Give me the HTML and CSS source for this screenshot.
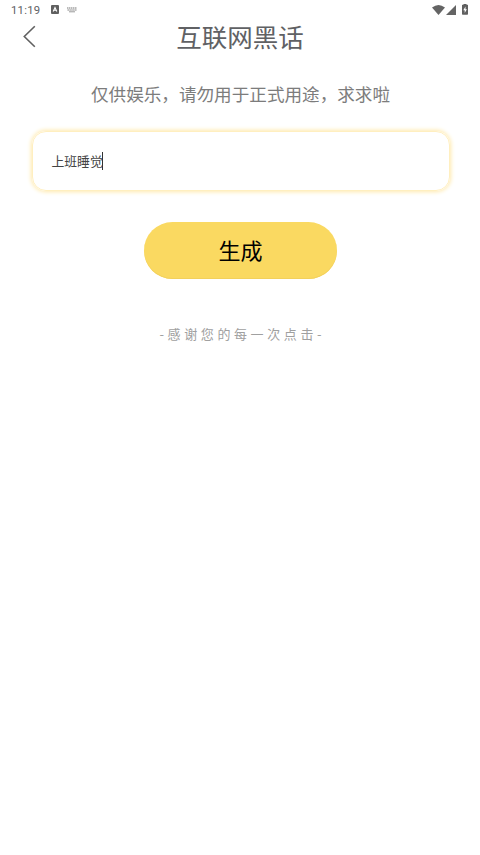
FILE: index.html
```html
<!DOCTYPE html>
<html lang="zh-CN">
<head>
<meta charset="utf-8">
<title>互联网黑话</title>
<link rel="stylesheet" href="styles.css">
</head>
<body>
<div class="status">
  <span class="time">11:19</span>
  <svg class="ime" width="8" height="9" viewBox="0 0 8 9"><rect width="8" height="9" rx="1" fill="#606060"/><path d="M2.200 6.500 4 2.500l1.800 4M2.800 5.300h2.400" fill="none" stroke="#fff" stroke-width="1.100"/></svg>
  <svg class="keyboard" width="10" height="6" viewBox="0 0 10 6"><path d="M0 1h10M.5 3h9" stroke="#777" stroke-width="1.200" stroke-dasharray="1.400 .5"/><path d="M2 4.800h6" stroke="#999" stroke-width="1"/></svg>
  <span class="spacer"></span>
  <svg class="wifi" width="13" height="10" viewBox="0 0 13 10"><path d="M0 2.500Q6.500-2.500 13 2.500L6.500 10Z" fill="#646464"/></svg>
  <svg class="signal" width="10" height="10" viewBox="0 0 10 10"><path d="M10 0v10H0Z" fill="#646464"/></svg>
  <svg class="battery" width="6" height="11" viewBox="0 0 6 11"><path d="M1.500 0h3v.7h1q.5 0 .5.500v8.800q0 .7-.7.700H.7q-.7 0-.7-.7V1.200Q0 .7.500.7h1Z" fill="#606060"/><path d="M3.500 2.500 1.300 6.300h1.400V9l2.200-3.800H3.500Z" fill="#fff"/></svg>
</div>
<header class="header">
  <svg class="back" width="14" height="24" viewBox="0 0 14 24"><path d="M12.800 1.200 2.300 11.500l10.500 10.300" fill="none" stroke="#606060" stroke-width="1.600"/></svg>
  <h1>互联网黑话</h1>
</header>
<main>
  <p class="notice">仅供娱乐，请勿用于正式用途，求求啦</p>
  <div class="field"><span>上班睡觉</span><i class="caret"></i></div>
  <button class="generate">生成</button>
  <p class="thanks">-感谢您的每一次点击-</p>
</main>
</body>
</html>
```
FILE: styles.css
```css
* { box-sizing: border-box; }
body { margin: 0; height: 855px; background: #fff; color: #606164; font-family: "Noto Sans CJK SC", sans-serif; overflow: hidden; }
.status { height: 19px; display: flex; align-items: center; padding: 0 12px 0 11px; }
.time { font: 11.300px/19px Roboto, sans-serif; letter-spacing: .25px; width: 40px; padding-top: 1px; }
.keyboard { margin-left: 8px; }
.spacer { flex: 1; }
.signal { margin-left: 1px; }
.battery { margin-left: 6px; }
.header { height: 35px; display: grid; grid-template-columns: 58px 1fr 58px; align-items: center; }
.back { margin-left: 22px; }
h1 { margin: -1px 0 0; font-size: 25.500px; font-weight: 400; line-height: 36px; text-align: center; }
main { display: flex; flex-direction: column; align-items: center; padding-left: 1px; }
.notice { margin: 26px 0 0; font-size: 17.600px; line-height: 28px; color: #7c7c7c; white-space: nowrap; }
.field { width: 418px; height: 60px; margin-top: 23px; border: 1px solid #ffefc0; border-radius: 14px; box-shadow: 0 0 4px 1px #ffe9ac; display: flex; align-items: center; padding: 0 0 2px 19px; font-size: 12.800px; color: #444; }
.caret { width: 1px; height: 18px; margin: 2px 0 0 -1px; background: #333; }
.generate { width: 193px; height: 57px; margin-top: 31px; padding: 0 0 2px; border: 0; border-radius: 29px; background: #fad961; color: #000; font: 22px/55px "Noto Sans CJK SC", sans-serif; box-shadow: inset 0 -1px #f2d05c; }
.thanks { margin: 45px 0 0; padding-left: 3.600px; font-size: 13px; line-height: 20px; letter-spacing: 3.600px; color: #a0a0a0; white-space: nowrap; }
```
